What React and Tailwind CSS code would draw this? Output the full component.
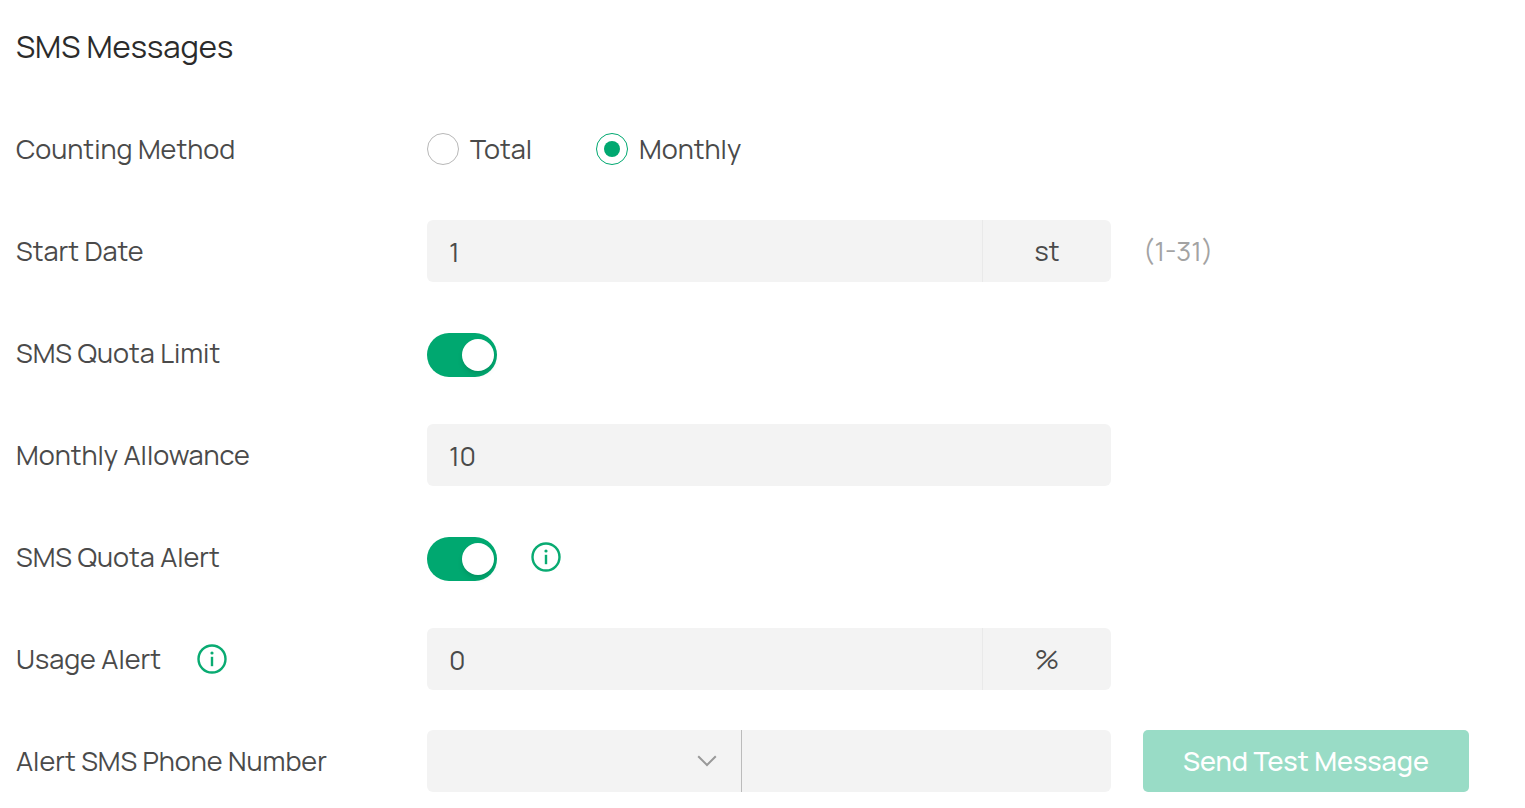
import { useState } from "react";

function InfoIcon() {
  return (
    <svg viewBox="0 0 30 30" className="size-[30px]" fill="none" aria-hidden="true">
      <circle cx="15" cy="15" r="13.5" stroke="#09ab72" strokeWidth="2.4" />
      <circle cx="15" cy="9" r="1.6" fill="#09ab72" />
      <path d="M15 12.8V22.2" stroke="#09ab72" strokeWidth="2.4" />
    </svg>
  );
}

function InfoButton({ label }) {
  return (
    <button type="button" aria-label={label} className="shrink-0">
      <InfoIcon />
    </button>
  );
}

function Row({ label, htmlFor, info, children }) {
  return (
    <div className="flex h-[62px] items-center">
      <div className="flex w-[411px] shrink-0 items-center gap-9">
        <label htmlFor={htmlFor}>{label}</label>
        {info && <InfoButton label={info} />}
      </div>
      {children}
    </div>
  );
}

function Field({ id, value, onChange, unit }) {
  return (
    <div className="flex h-full min-w-0 max-w-[684px] flex-1 overflow-hidden rounded-md bg-[#f3f3f3]">
      <input
        id={id}
        type="text"
        inputMode="numeric"
        value={value}
        onChange={(e) => onChange(e.target.value)}
        className="h-full min-w-0 flex-1 bg-transparent px-[22px] outline-none"
      />
      {unit && (
        <span className="flex w-[129px] shrink-0 items-center justify-center border-l border-[#e9e9e9]">
          {unit}
        </span>
      )}
    </div>
  );
}

function Radio({ label, checked, onChange }) {
  return (
    <label className="flex items-center gap-[11px]">
      <input
        type="radio"
        name="counting-method"
        checked={checked}
        onChange={onChange}
        className="grid size-8 appearance-none place-items-center rounded-full border border-[#b8b8b8] before:size-4 before:rounded-full checked:border-[#00a870] checked:before:bg-[#00a870]"
      />
      {label}
    </label>
  );
}

function Toggle({ id, checked, onChange }) {
  return (
    <input
      id={id}
      type="checkbox"
      role="switch"
      checked={checked}
      onChange={(e) => onChange(e.target.checked)}
      className="mt-1 flex h-11 w-[70px] shrink-0 appearance-none items-center rounded-full bg-[#c4c4c4] px-[3px] before:size-8 before:rounded-full before:bg-white before:shadow-md checked:justify-end checked:bg-[#00a870]"
    />
  );
}

export default function App() {
  const [method, setMethod] = useState("monthly");
  const [startDate, setStartDate] = useState("1");
  const [limit, setLimit] = useState(true);
  const [allowance, setAllowance] = useState("10");
  const [alert, setAlert] = useState(true);
  const [usage, setUsage] = useState("0");

  return (
    <main className="bg-white px-4 pb-4 pt-[26px] font-['Manrope','Inter',sans-serif] text-[27px] font-normal leading-10 text-[#4a4a4a]">
      <h1 className="text-[31px] font-normal leading-10 text-[#2b2b2b]">SMS Messages</h1>
      <form className="mt-[52px] flex flex-col gap-10" onSubmit={(e) => e.preventDefault()}>
        <Row label="Counting Method">
          <div className="flex gap-16" role="radiogroup" aria-label="Counting Method">
            <Radio label="Total" checked={method === "total"} onChange={() => setMethod("total")} />
            <Radio label="Monthly" checked={method === "monthly"} onChange={() => setMethod("monthly")} />
          </div>
        </Row>
        <Row label="Start Date" htmlFor="start-date">
          <Field id="start-date" value={startDate} onChange={setStartDate} unit="st" />
          <span className="ml-8 w-[326px] shrink-0 text-[#a3a3a3]">(1-31)</span>
        </Row>
        <Row label="SMS Quota Limit" htmlFor="quota-limit">
          <Toggle id="quota-limit" checked={limit} onChange={setLimit} />
        </Row>
        <Row label="Monthly Allowance" htmlFor="allowance">
          <Field id="allowance" value={allowance} onChange={setAllowance} />
          <span className="ml-8 w-[326px] shrink-0" />
        </Row>
        <Row label="SMS Quota Alert" htmlFor="quota-alert">
          <div className="flex items-center gap-[34px]">
            <Toggle id="quota-alert" checked={alert} onChange={setAlert} />
            <InfoButton label="About the quota alert" />
          </div>
        </Row>
        <Row label="Usage Alert" htmlFor="usage-alert" info="About the usage alert">
          <Field id="usage-alert" value={usage} onChange={setUsage} unit="%" />
          <span className="ml-8 w-[326px] shrink-0" />
        </Row>
        <Row label="Alert SMS Phone Number" htmlFor="phone">
          <div className="flex h-full min-w-0 max-w-[684px] flex-1 overflow-hidden rounded-md bg-[#f3f3f3]">
            <div className="grid h-full w-[315px] items-center border-r border-[#bbb]">
              <select
                aria-label="Country code"
                defaultValue=""
                className="col-start-1 row-start-1 h-full w-full appearance-none bg-transparent px-[22px] outline-none"
              >
                <option value="" />
              </select>
              <svg
                viewBox="0 0 20 12"
                className="pointer-events-none col-start-1 row-start-1 mr-6 h-3 w-5 justify-self-end"
                fill="none"
                aria-hidden="true"
              >
                <path d="M1.2 1.2L10 10L18.8 1.2" stroke="#999" strokeWidth="2" />
              </svg>
            </div>
            <input id="phone" type="tel" className="h-full min-w-0 flex-1 bg-transparent px-[22px] outline-none" />
          </div>
          <button
            type="submit"
            className="ml-8 h-full w-[326px] shrink-0 rounded-[5px] bg-[#99dcc6] font-medium text-white"
          >
            Send Test Message
          </button>
        </Row>
      </form>
    </main>
  );
}
